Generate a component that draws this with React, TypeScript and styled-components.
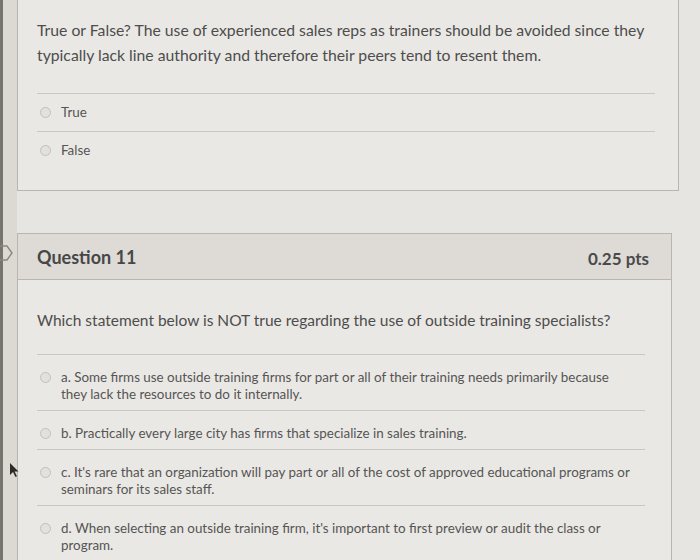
import styled, { createGlobalStyle } from 'styled-components';

const GlobalStyle = createGlobalStyle`
    html, body {
        margin: 0;
        padding: 0;
        background: #e7e5e1;
        font-family: Lato, "Open Sans", sans-serif;
        overflow: hidden;
    }
`;

const Page = styled.div`
    display: flex;
    width: 700px;
    height: 560px;
    overflow: hidden;
`;

const SideStrip = styled.div`
    position: relative;
    width: 14px;
    flex-shrink: 0;
    background: #dcd9d3;
    border-left: 3px solid #77736e;
`;

const SideIcon = styled.svg`
    position: absolute;
    left: -3px;
    top: 244px;
`;

const Cursor = styled.svg`
    position: absolute;
    left: 6px;
    top: 462px;
`;

const Main = styled.div`
    flex: 1;
    display: flex;
    flex-direction: column;
    gap: 42px;
`;

const Card = styled.div<{ $right: number; $open?: boolean }>`
    margin-right: ${(p) => p.$right}px;
    background: #eae8e4;
    border: 1px solid #b9b6b1;
    border-top: ${(p) => (p.$open ? 'none' : '1px solid #b9b6b1')};
`;

const Header = styled.div`
    display: flex;
    justify-content: space-between;
    align-items: center;
    height: 45px;
    padding: 0 22px 0 19px;
    background: #dedbd6;
    border-bottom: 1px solid #b9b6b1;
`;

const QuestionTitle = styled.div`
    font-size: 18px;
    font-weight: 700;
    color: #474747;
`;

const Points = styled.div`
    font-size: 17px;
    font-weight: 700;
    color: #4a4a4a;
    margin-top: 4px;
`;

const Body = styled.div<{ $top: number; $right: number }>`
    padding: ${(p) => p.$top}px ${(p) => p.$right}px 0 19px;
`;

const Prompt = styled.div<{ $size: number; $line: number; $gap: number }>`
    font-size: ${(p) => p.$size}px;
    line-height: ${(p) => p.$line}px;
    color: #4d4d4d;
    margin-bottom: ${(p) => p.$gap}px;
`;

const Answers = styled.div<{ $bottom: number }>`
    padding-bottom: ${(p) => p.$bottom}px;
`;

const Answer = styled.div<{ $top: number; $bottom: number }>`
    display: flex;
    align-items: flex-start;
    gap: 10px;
    padding: ${(p) => p.$top}px 0 ${(p) => p.$bottom}px 3px;
    border-top: 1px solid #cac7c2;
    font-size: 13.4px;
    line-height: 17px;
    color: #555;
`;

const Radio = styled.span`
    width: 9px;
    height: 9px;
    margin-top: 3px;
    flex-shrink: 0;
    border-radius: 50%;
    border: 1px solid #c3c0bb;
    background: #e3e1dd;
`;

const AnswerText = styled.span`
    max-width: 572px;
`;

const truthOptions = ['True', 'False'];

const trainingOptions = [
    'a. Some firms use outside training firms for part or all of their training needs primarily because they lack the resources to do it internally.',
    'b. Practically every large city has firms that specialize in sales training.',
    "c. It's rare that an organization will pay part or all of the cost of approved educational programs or seminars for its sales staff.",
    "d. When selecting an outside training firm, it's important to first preview or audit the class or program.",
];

export default function App() {
    return (
        <Page>
            <GlobalStyle />
            <SideStrip>
                <SideIcon width="14" height="18" viewBox="0 0 14 18">
                    <path d="M0 2 H7 L12 9 L7 16 H0" fill="none" stroke="#8a8680" strokeWidth="1.4" />
                </SideIcon>
                <Cursor width="10" height="16" viewBox="0 0 10 16">
                    <path d="M1 1 L1 13 L4 10 L6.5 15 L8 14.3 L5.6 9.4 L9.5 9.4 Z" fill="#2b2a28" />
                </Cursor>
            </SideStrip>
            <Main>
                <Card $right={21} $open>
                    <Body $top={17} $right={23}>
                        <Prompt $size={15.75} $line={25} $gap={26}>
                            True or False? The use of experienced sales reps as trainers should be avoided since they
                            typically lack line authority and therefore their peers tend to resent them.
                        </Prompt>
                        <Answers $bottom={21}>
                            {truthOptions.map((o) => (
                                <Answer key={o} $top={10} $bottom={10}>
                                    <Radio />
                                    <AnswerText>{o}</AnswerText>
                                </Answer>
                            ))}
                        </Answers>
                    </Body>
                </Card>
                <Card $right={28}>
                    <Header>
                        <QuestionTitle>Question 11</QuestionTitle>
                        <Points>0.25 pts</Points>
                    </Header>
                    <Body $top={29} $right={26}>
                        <Prompt $size={15.5} $line={22} $gap={23}>
                            Which statement below is NOT true regarding the use of outside training specialists?
                        </Prompt>
                        <Answers $bottom={20}>
                            {trainingOptions.map((o) => (
                                <Answer key={o} $top={14} $bottom={7}>
                                    <Radio />
                                    <AnswerText>{o}</AnswerText>
                                </Answer>
                            ))}
                        </Answers>
                    </Body>
                </Card>
            </Main>
        </Page>
    );
}
